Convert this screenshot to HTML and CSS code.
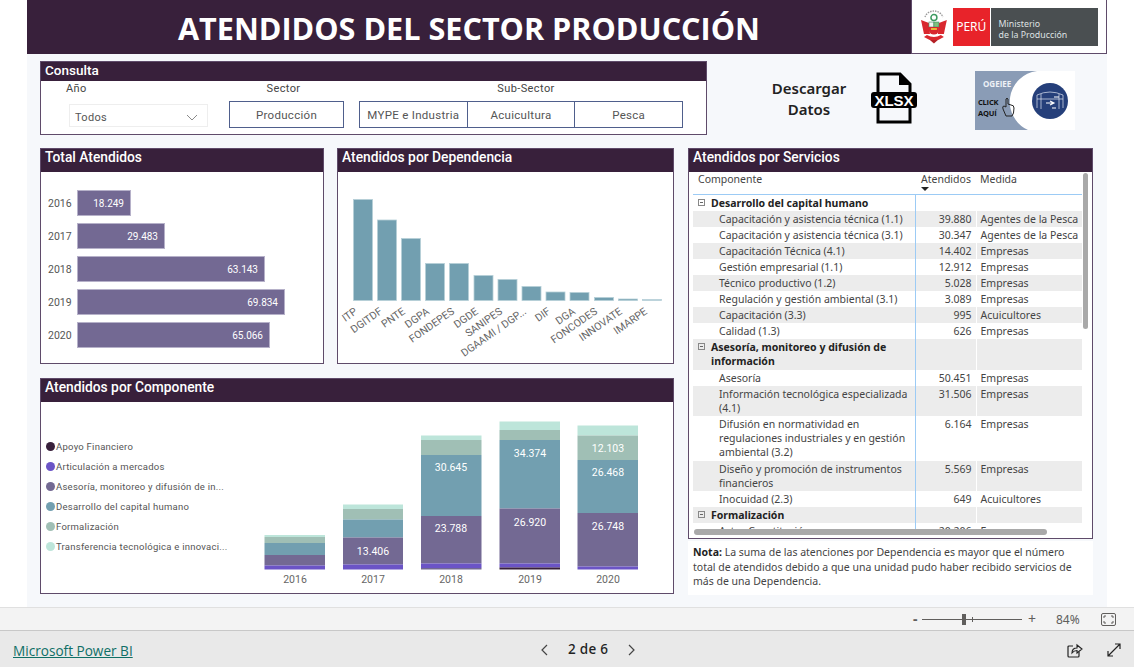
FILE: index.html
```html
<!DOCTYPE html>
<html lang="es">
<head>
    <meta charset="UTF-8">
    <title>Atendidos del Sector Producción</title>
    <link rel="stylesheet" href="styles.css">
</head>
<body>
    <div class="report">
        <header class="report-header">
            <h1>ATENDIDOS DEL SECTOR PRODUCCIÓN</h1>
            <div class="logo-box">
                <svg class="crest" viewBox="0 0 26 34" width="26" height="34">
                    <path d="M0 10 L8 13 L9 24 L3 24 Z" fill="#d9272e"/>
                    <path d="M26 10 L18 13 L17 24 L23 24 Z" fill="#d9272e"/>
                    <path d="M4 7 A9.500 9 0 0 1 22 7" fill="none" stroke="#9a9a9a" stroke-width="1.400" stroke-dasharray="1.500 1"/>
                    <circle cx="13" cy="7.500" r="3" fill="none" stroke="#3c9a60" stroke-width="1.500"/>
                    <rect x="8" y="12" width="5" height="5" fill="#f3f3f3" stroke="#3c8a60" stroke-width=".6"/>
                    <rect x="13" y="12" width="5" height="5" fill="#7fc27f" stroke="#3c8a60" stroke-width=".6"/>
                    <path d="M8 17 H18 V20 A5 4.500 0 0 1 8 20 Z" fill="#d9272e"/>
                    <path d="M10 18 H16 V20 H10 Z" fill="#e9b43a"/>
                    <path d="M3 27 Q13 34 23 27 L20 25 Q13 29 6 25 Z" fill="#d9272e"/>
                    <path d="M9 30 L13 33.500 L17 30 Z" fill="#b41f25"/>
                </svg>
                <div class="peru-mark">PERÚ</div>
                <div class="ministry-mark">Ministerio<br>de la Producción</div>
            </div>
        </header>

        <div class="content">
            <div class="top-row">
                <section class="consulta">
                    <div class="consulta-title">Consulta</div>
                    <div class="filters">
                        <div class="filter filter-year">
                            <div class="filter-label year-label">Año</div>
                            <div class="dropdown">
                                <span>Todos</span>
                                <svg viewBox="0 0 12 7" width="12" height="7"><path d="M1 1 L6 6 L11 1" fill="none" stroke="#8a8a8a"/></svg>
                            </div>
                        </div>
                        <div class="filter filter-sector">
                            <div class="filter-label sector-label">Sector</div>
                            <div class="slicer"><div class="slicer-btn">Producción</div></div>
                        </div>
                        <div class="filter filter-sub">
                            <div class="filter-label sub-label">Sub-Sector</div>
                            <div class="slicer">
                                <div class="slicer-btn">MYPE e Industria</div>
                                <div class="slicer-btn">Acuicultura</div>
                                <div class="slicer-btn">Pesca</div>
                            </div>
                        </div>
                    </div>
                </section>

                <div class="download-label">Descargar<br>Datos</div>
                <svg class="xlsx-icon" viewBox="0 0 46 52" width="46" height="52">
                    <path d="M7 20 V2 H29 L39 12 V20" fill="none" stroke="#000" stroke-width="3"/>
                    <path d="M28 1 V13 H40 Z" fill="#000"/>
                    <path d="M7 36 V50 H39 V36" fill="none" stroke="#000" stroke-width="3"/>
                    <rect x="0" y="20" width="46" height="16" rx="3" fill="#000"/>
                    <text class="xlsx-text" x="23" y="33.500" text-anchor="middle">XLSX</text>
                </svg>
                <svg class="ogeiee-tile" viewBox="0 0 100 59" width="100" height="59">
                    <rect width="100" height="59" fill="#8a9cb6"/>
                    <path d="M62 0 H100 V59 H53 A31 31 0 0 1 62 0 Z" fill="#fff"/>
                    <circle cx="75" cy="30" r="18" fill="#253f7a"/>
                    <path d="M62 24 Q75 18 88 24 M62 24 V37 M88 24 V37 M66 23 V38 M84 23 V38 M62 28 H88" fill="none" stroke="#dfe5f2" stroke-width=".7"/>
                    <path d="M71 32 L79 32 M75 30 L79 32 L75 34 M79 26 L84 26 M77 37 L81 37" fill="none" stroke="#fff" stroke-width="1.100"/>
                    <text class="ogeiee-name" x="8" y="16">OGEIEE</text>
                    <text class="ogeiee-click" x="3" y="34">CLICK</text>
                    <text class="ogeiee-click" x="3" y="45">AQUÍ</text>
                    <path d="M31 28 V36 L29 35 Q27 35 28 38 L31 45 H37 Q39 43 39 37 Q39 34 36 34 L33 33 V28 Q32 26.500 31 28 Z" fill="none" stroke="#222" stroke-width="1"/>
                </svg>
            </div>

            <div class="main-row">
                <div class="left-col">
                    <div class="chart-row">
                        <section class="panel panel-total">
                            <h2 class="panel-title">Total Atendidos</h2>
                            <div class="total-bars">
                                <div class="total-row"><span class="total-year">2016</span><div class="total-bar" style="width:54px">18.249</div></div>
                                <div class="total-row"><span class="total-year">2017</span><div class="total-bar" style="width:88px">29.483</div></div>
                                <div class="total-row"><span class="total-year">2018</span><div class="total-bar" style="width:188px">63.143</div></div>
                                <div class="total-row"><span class="total-year">2019</span><div class="total-bar" style="width:208px">69.834</div></div>
                                <div class="total-row"><span class="total-year">2020</span><div class="total-bar" style="width:193px">65.066</div></div>
                            </div>
                        </section>

                        <section class="panel panel-dependencia">
                            <h2 class="panel-title">Atendidos por Dependencia</h2>
                            <svg class="chart" viewBox="338 172 335 191" width="335" height="191">
                                <g class="bars-teal">
                                    <rect x="353.500" y="199.500" width="19" height="101"/>
                                    <rect x="377.500" y="220" width="19" height="80.500"/>
                                    <rect x="401.500" y="238.500" width="19" height="62"/>
                                    <rect x="425.500" y="263.500" width="19" height="37"/>
                                    <rect x="449.500" y="263.500" width="19" height="37"/>
                                    <rect x="474" y="275.500" width="19" height="25"/>
                                    <rect x="498" y="279.500" width="19" height="21"/>
                                    <rect x="522" y="286.500" width="19" height="14"/>
                                    <rect x="546" y="292" width="19" height="8.500"/>
                                    <rect x="570" y="292.500" width="19" height="8"/>
                                    <rect x="594.500" y="297.500" width="19" height="3"/>
                                    <rect x="618.500" y="299" width="19" height="1.500"/>
                                    <rect class="bar-faint" x="642.500" y="299.500" width="19" height="1"/>
                                </g>
                                <g class="axis-label">
                                    <text transform="translate(358 313) rotate(-35)" text-anchor="end">ITP</text>
                                    <text transform="translate(383 313) rotate(-35)" text-anchor="end">DGITDF</text>
                                    <text transform="translate(406 313) rotate(-35)" text-anchor="end">PNTE</text>
                                    <text transform="translate(430 313) rotate(-35)" text-anchor="end">DGPA</text>
                                    <text transform="translate(455 313) rotate(-35)" text-anchor="end">FONDEPES</text>
                                    <text transform="translate(479 313) rotate(-35)" text-anchor="end">DGDE</text>
                                    <text transform="translate(503 313) rotate(-35)" text-anchor="end">SANIPES</text>
                                    <text transform="translate(527 313) rotate(-35)" text-anchor="end">DGAAMI / DGP...</text>
                                    <text transform="translate(551 313) rotate(-35)" text-anchor="end">DIF</text>
                                    <text transform="translate(576 313) rotate(-35)" text-anchor="end">DGA</text>
                                    <text transform="translate(598 313) rotate(-35)" text-anchor="end">FONCODES</text>
                                    <text transform="translate(623 313) rotate(-35)" text-anchor="end">INNOVATE</text>
                                    <text transform="translate(648 313) rotate(-35)" text-anchor="end">IMARPE</text>
                                </g>
                            </svg>
                        </section>
                    </div>

                    <section class="panel panel-componente">
                        <h2 class="panel-title">Atendidos por Componente</h2>
                        <div class="componente-body">
                            <ul class="legend">
                                <li><i class="dot dot-dark"></i>Apoyo Financiero</li>
                                <li><i class="dot dot-violet"></i>Articulación a mercados</li>
                                <li><i class="dot dot-purple"></i>Asesoría, monitoreo y difusión de in...</li>
                                <li><i class="dot dot-teal"></i>Desarrollo del capital humano</li>
                                <li><i class="dot dot-sage"></i>Formalización</li>
                                <li><i class="dot dot-mint"></i>Transferencia tecnológica e innovaci...</li>
                            </ul>
                            <svg class="chart" viewBox="230 402 443 191" width="443" height="191">
                                <!-- 2016 -->
                                <rect class="s-mint" x="264.500" y="535" width="60.500" height="2"/>
                                <rect class="s-sage" x="264.500" y="537" width="60.500" height="6"/>
                                <rect class="s-teal" x="264.500" y="543" width="60.500" height="12"/>
                                <rect class="s-purple" x="264.500" y="555" width="60.500" height="10.500"/>
                                <rect class="s-violet" x="264.500" y="565.500" width="60.500" height="4"/>
                                <!-- 2017 -->
                                <rect class="s-mint" x="343" y="504.500" width="60" height="4.500"/>
                                <rect class="s-sage" x="343" y="509" width="60" height="10.500"/>
                                <rect class="s-teal" x="343" y="519.500" width="60" height="18"/>
                                <rect class="s-purple" x="343" y="537.500" width="60" height="27"/>
                                <rect class="s-violet" x="343" y="564.500" width="60" height="5"/>
                                <!-- 2018 -->
                                <rect class="s-mint" x="421" y="435.500" width="60.500" height="4.500"/>
                                <rect class="s-sage" x="421" y="440" width="60.500" height="15"/>
                                <rect class="s-teal" x="421" y="455" width="60.500" height="61"/>
                                <rect class="s-purple" x="421" y="516" width="60.500" height="47.500"/>
                                <rect class="s-violet" x="421" y="563.500" width="60.500" height="4.500"/>
                                <rect class="s-purple" x="421" y="568" width="60.500" height="1.500"/>
                                <!-- 2019 -->
                                <rect class="s-mint" x="499.500" y="421.500" width="60.500" height="8.500"/>
                                <rect class="s-sage" x="499.500" y="430" width="60.500" height="10"/>
                                <rect class="s-teal" x="499.500" y="440" width="60.500" height="68.500"/>
                                <rect class="s-purple" x="499.500" y="508.500" width="60.500" height="55"/>
                                <rect class="s-violet" x="499.500" y="563.500" width="60.500" height="4"/>
                                <rect class="s-dark" x="499.500" y="567.500" width="60.500" height="2"/>
                                <!-- 2020 -->
                                <rect class="s-mint" x="577.500" y="425.500" width="60.500" height="10"/>
                                <rect class="s-sage" x="577.500" y="435.500" width="60.500" height="24.500"/>
                                <rect class="s-teal" x="577.500" y="460" width="60.500" height="53"/>
                                <rect class="s-purple" x="577.500" y="513" width="60.500" height="53.500"/>
                                <rect class="s-violet" x="577.500" y="566.500" width="60.500" height="3"/>

                                <g class="stack-value" text-anchor="middle">
                                    <text x="373" y="554.500">13.406</text>
                                    <text x="451" y="470.500">30.645</text>
                                    <text x="451" y="532">23.788</text>
                                    <text x="530" y="456.500">34.374</text>
                                    <text x="530" y="525.500">26.920</text>
                                    <text x="608" y="452">12.103</text>
                                    <text x="608" y="476">26.468</text>
                                    <text x="608" y="529.500">26.748</text>
                                </g>
                                <g class="axis-label" text-anchor="middle">
                                    <text x="295" y="583">2016</text>
                                    <text x="373" y="583">2017</text>
                                    <text x="451" y="583">2018</text>
                                    <text x="530" y="583">2019</text>
                                    <text x="608" y="583">2020</text>
                                </g>
                            </svg>
                        </div>
                    </section>
                </div>

                <div class="right-col">
                    <section class="panel panel-servicios">
                        <h2 class="panel-title">Atendidos por Servicios</h2>
                        <div class="table-clip">
                            <table class="matrix">
                                <thead>
                                    <tr>
                                        <th class="col-name">Componente</th>
                                        <th class="col-num">Atendidos<i class="sort-arrow"></i></th>
                                        <th class="col-unit">Medida</th>
                                    </tr>
                                </thead>
                                <tbody>
                                    <tr class="group"><td><i class="toggle"></i><div>Desarrollo del capital humano</div></td><td></td><td></td></tr>
                                    <tr class="alt"><td>Capacitación y asistencia técnica (1.1)</td><td>39.880</td><td>Agentes de la Pesca</td></tr>
                                    <tr><td>Capacitación y asistencia técnica (3.1)</td><td>30.347</td><td>Agentes de la Pesca</td></tr>
                                    <tr class="alt"><td>Capacitación Técnica (4.1)</td><td>14.402</td><td>Empresas</td></tr>
                                    <tr><td>Gestión empresarial (1.1)</td><td>12.912</td><td>Empresas</td></tr>
                                    <tr class="alt"><td>Técnico productivo (1.2)</td><td>5.028</td><td>Empresas</td></tr>
                                    <tr><td>Regulación y gestión ambiental (3.1)</td><td>3.089</td><td>Empresas</td></tr>
                                    <tr class="alt"><td>Capacitación (3.3)</td><td>995</td><td>Acuicultores</td></tr>
                                    <tr><td>Calidad (1.3)</td><td>626</td><td>Empresas</td></tr>
                                    <tr class="group alt tall-group"><td><i class="toggle"></i><div>Asesoría, monitoreo y difusión de información</div></td><td></td><td></td></tr>
                                    <tr><td>Asesoría</td><td>50.451</td><td>Empresas</td></tr>
                                    <tr class="alt"><td>Información tecnológica especializada (4.1)</td><td>31.506</td><td>Empresas</td></tr>
                                    <tr class="tall-row"><td>Difusión en normatividad en regulaciones industriales y en gestión ambiental (3.2)</td><td>6.164</td><td>Empresas</td></tr>
                                    <tr class="alt"><td>Diseño y promoción de instrumentos financieros</td><td>5.569</td><td>Empresas</td></tr>
                                    <tr><td>Inocuidad (2.3)</td><td>649</td><td>Acuicultores</td></tr>
                                    <tr class="group alt"><td><i class="toggle"></i><div>Formalización</div></td><td></td><td></td></tr>
                                    <tr><td>Actas Constitución</td><td>20.206</td><td>Empresas</td></tr>
                                </tbody>
                            </table>
                            <div class="scroll-v"></div>
                        </div>
                        <div class="scroll-h"></div>
                    </section>
                    <p class="nota"><b>Nota:</b> La suma de las atenciones por Dependencia es mayor que el número total de atendidos debido a que una unidad pudo haber recibido servicios de más de una Dependencia.</p>
                </div>
            </div>
        </div>
    </div>

    <div class="zoom-bar">
        <span class="zoom-minus">-</span>
        <div class="zoom-track"><i class="zoom-thumb"></i><i class="zoom-tick"></i></div>
        <span class="zoom-plus">+</span>
        <span class="zoom-value">84%</span>
        <svg class="fit-icon" viewBox="0 0 15 13" width="15" height="13">
            <rect x=".5" y=".5" width="14" height="12" rx="1.500" fill="none" stroke="#605e5c"/>
            <path d="M3 5 V3 H5 M10 3 H12 V5 M12 8 V10 H10 M5 10 H3 V8" fill="none" stroke="#605e5c"/>
        </svg>
    </div>

    <footer class="pbi-footer">
        <a class="pbi-link" href="#">Microsoft Power BI</a>
        <div class="pager">
            <svg viewBox="0 0 8 12" width="8" height="12"><path d="M7 1 L2 6 L7 11" fill="none" stroke="#444" stroke-width="1.200"/></svg>
            <span>2 de 6</span>
            <svg viewBox="0 0 8 12" width="8" height="12"><path d="M1 1 L6 6 L1 11" fill="none" stroke="#444" stroke-width="1.200"/></svg>
        </div>
        <div class="footer-icons">
            <svg viewBox="0 0 16 15" width="16" height="15">
                <path d="M6 3 H2 Q1 3 1 4 V13 Q1 14 2 14 H11 Q12 14 12 13 V9" fill="none" stroke="#222" stroke-width="1.200"/>
                <path d="M5 10 Q5 5 10 5 V2 L15 6 L10 10 V7.500 Q7 7.500 5 10 Z" fill="none" stroke="#222" stroke-width="1.100"/>
            </svg>
            <svg viewBox="0 0 14 14" width="14" height="14">
                <path d="M1 13 L13 1 M8 1 H13 V6 M1 8 V13 H6" fill="none" stroke="#222" stroke-width="1.200"/>
            </svg>
        </div>
    </footer>
</body>
</html>
```

FILE: styles.css
```css
* {
    box-sizing: border-box;
}
body {
    margin: 0;
    background: white;
    font-family: "Noto Sans", "Open Sans", sans-serif;
    color: #333;
    height: 667px;
    overflow: hidden;
}
.report {
    width: 1080px;
    height: 607px;
    margin-left: 27px;
    background: #f6f8fb;
}
.report-header {
    height: 54px;
    background: #38203b;
    display: flex;
    justify-content: space-between;
}
.report-header h1 {
    margin: 0 0 0 151px;
    color: white;
    font-family: "Open Sans", sans-serif;
    font-size: 30.600px;
    font-weight: 700;
    line-height: 56px;
    white-space: nowrap;
}
.logo-box {
    width: 196px;
    background: white;
    border: 1px solid #5f4b6a;
    border-top: 0;
    display: flex;
    align-items: center;
    padding: 0 8px 0 9px;
    height: 54px;
}
.crest {
    margin-right: 6px;
}
.peru-mark {
    width: 37px;
    height: 38px;
    background: #e8232a;
    color: white;
    font-size: 12px;
    line-height: 38px;
    text-align: center;
    margin-right: 1px;
}
.ministry-mark {
    width: 108px;
    height: 38px;
    background: #4a4f51;
    color: #dfe2e3;
    font-size: 8.800px;
    line-height: 11px;
    padding: 11px 0 0 8px;
    white-space: nowrap;
}

.content {
    padding: 7px 0 0 13px;
}
.top-row {
    display: flex;
    align-items: flex-start;
    height: 74px;
    margin-bottom: 13px;
}
.consulta {
    width: 667px;
    height: 74px;
    background: white;
    border: 1px solid #5f4b6a;
}
.consulta-title {
    height: 19px;
    background: #38203b;
    color: white;
    font-family: Roboto, sans-serif;
    font-weight: 500;
    font-size: 13.500px;
    line-height: 17px;
    padding-left: 4px;
}
.filters {
    display: flex;
    padding-left: 28px;
}
.filter-label {
    font-family: Roboto, sans-serif;
    font-size: 11px;
    letter-spacing: .4px;
    color: #444;
    text-align: center;
    line-height: 16px;
    height: 20px;
}
.year-label {
    text-align: left;
    margin-left: -3px;
}
.sector-label {
    padding-right: 6px;
}
.sub-label {
    padding-left: 10px;
}
.filter-year {
    width: 139px;
    margin-right: 21px;
}
.filter-sector {
    width: 115px;
    margin-right: 15px;
}
.filter-sub {
    width: 324px;
}
.dropdown {
    height: 23px;
    margin-top: 3px;
    border: 1px solid #eeeeee;
    display: flex;
    align-items: center;
    justify-content: space-between;
    padding: 4px 9px 0 5px;
    font-family: Roboto, sans-serif;
    font-size: 11px;
    letter-spacing: .3px;
    color: #555;
}
.slicer {
    display: flex;
}
.slicer-btn {
    flex: 1;
    height: 27px;
    border: 1px solid #4f5f8c;
    margin-left: -1px;
    text-align: center;
    font-family: Roboto, sans-serif;
    font-size: 11.500px;
    letter-spacing: .3px;
    line-height: 27px;
    color: #555;
    white-space: nowrap;
}
.slicer-btn:first-child {
    margin-left: 0;
}
.download-label {
    width: 76px;
    margin: 17px 0 0 64px;
    font-size: 15px;
    font-weight: 600;
    line-height: 21px;
    color: #222;
    text-align: center;
}
.xlsx-icon {
    margin: 11px 0 0 24px;
}
.xlsx-text {
    font-family: "Liberation Sans", sans-serif;
    font-weight: 700;
    font-size: 15px;
    fill: white;
}
.ogeiee-tile {
    margin: 10px 0 0 58px;
}
.ogeiee-name {
    font-family: "Open Sans", sans-serif;
    font-weight: 700;
    font-size: 8px;
    fill: #eef1f6;
}
.ogeiee-click {
    font-family: "Open Sans", sans-serif;
    font-weight: 700;
    font-size: 7.500px;
    letter-spacing: -.2px;
    fill: #111;
}

.main-row {
    display: grid;
    grid-template-columns: 634px 405px;
    column-gap: 14px;
}
.left-col {
    display: flex;
    flex-direction: column;
    gap: 14px;
}
.chart-row {
    display: flex;
    gap: 13px;
}
.panel {
    background: white;
    border: 1px solid #5f4b6a;
    overflow: hidden;
}
.panel-title {
    margin: 0;
    height: 23px;
    background: #38203b;
    color: white;
    font-family: Roboto, sans-serif;
    font-size: 13.800px;
    font-weight: 500;
    line-height: 17px;
    padding-left: 4px;
}
.panel-total {
    width: 284px;
    height: 216px;
}
.panel-dependencia {
    width: 337px;
    height: 216px;
}
.panel-componente {
    height: 216px;
}
.chart {
    display: block;
}

.total-bars {
    padding: 18px 0 0 7px;
    display: flex;
    flex-direction: column;
    gap: 7px;
}
.total-row {
    display: flex;
    align-items: center;
    height: 26px;
}
.total-year {
    width: 29px;
    font-family: Roboto, sans-serif;
    font-size: 10.500px;
    color: #555;
}
.total-bar {
    height: 26px;
    background: #736993;
    border: 1px solid #b6b1c9;
    color: white;
    font-family: Roboto, sans-serif;
    font-size: 10px;
    line-height: 25px;
    text-align: right;
    padding-right: 6px;
}

.bars-teal rect {
    fill: #729fb0;
    stroke: #b6cfd8;
    stroke-width: .8;
}
.bars-teal .bar-faint {
    fill: #a9c6d1;
}
.axis-label text {
    font-family: Roboto, sans-serif;
    font-size: 10.500px;
    fill: #666;
}
.stack-value text {
    font-family: Roboto, sans-serif;
    font-size: 10.500px;
    fill: white;
}
.s-mint { fill: #bde5da; }
.s-sage { fill: #a0bfb5; }
.s-teal { fill: #729fb0; }
.s-purple { fill: #736993; }
.s-violet { fill: #6b54c6; }
.s-dark { fill: #38203b; }

.componente-body {
    display: flex;
}
.legend {
    list-style: none;
    width: 189px;
    margin: 0;
    padding: 34px 0 0 5px;
    font-family: Roboto, sans-serif;
    font-size: 9.500px;
    letter-spacing: .25px;
    color: #555;
}
.legend li {
    display: flex;
    align-items: center;
    height: 20.100px;
    white-space: nowrap;
}
.dot {
    width: 9px;
    height: 9px;
    border-radius: 50%;
    margin-right: 1px;
    flex: none;
}
.dot-dark { background: #38203b; }
.dot-violet { background: #6b54c6; }
.dot-purple { background: #736993; }
.dot-teal { background: #729fb0; }
.dot-sage { background: #a0bfb5; }
.dot-mint { background: #bde5da; }

.panel-servicios {
    height: 391px;
    position: relative;
}
.table-clip {
    position: relative;
    height: 357px;
    margin-left: 4px;
    overflow: hidden;
}
.matrix {
    width: 389px;
    table-layout: fixed;
    border-collapse: collapse;
    font-size: 10.500px;
    line-height: 14px;
    color: #444;
}
.matrix th {
    height: 22px;
    padding: 0;
    font-weight: 400;
    text-align: left;
    vertical-align: top;
    border-bottom: 1px solid #9ccbf5;
    white-space: nowrap;
}
.col-name {
    width: 222px;
    padding-left: 5px !important;
}
.col-num {
    width: 61px;
    padding-left: 6px !important;
    position: relative;
}
.col-unit {
    padding-left: 4px !important;
}
.sort-arrow {
    position: absolute;
    left: 6px;
    top: 15px;
    border: 4px solid transparent;
    border-top: 4px solid #222;
}
.matrix td {
    height: 16px;
    padding: 1px 0;
    vertical-align: top;
}
.matrix .tall-group td {
    height: 31px;
}
.matrix .tall-row td {
    height: 45px;
}
.matrix td:nth-child(1) {
    padding: 1px 4px 1px 26px;
    border-right: 1px solid #9ccbf5;
}
.matrix td:nth-child(2) {
    text-align: right;
    padding-right: 4px;
    border-right: 1px solid white;
}
.matrix td:nth-child(3) {
    padding-left: 4px;
    white-space: nowrap;
}
.matrix .alt td {
    background: #ececec;
}
.matrix .group td:first-child {
    position: relative;
    padding-left: 18px;
    padding-right: 8px;
    font-weight: 700;
    color: #222;
}
.toggle {
    position: absolute;
    left: 5px;
    top: 4px;
    width: 7px;
    height: 7px;
    border: 1px solid #888;
    background: linear-gradient(#666, #666) center / 3px 1px no-repeat;
}
.scroll-v {
    position: absolute;
    left: 390px;
    top: 1px;
    width: 5px;
    height: 156px;
    border-radius: 3px;
    background: #a9a9a9;
}
.scroll-h {
    margin: 0 0 0 5px;
    width: 353px;
    height: 6px;
    border-radius: 3px;
    background: #a9a9a9;
}
.nota {
    margin: 2px 0 0;
    height: 54px;
    background: white;
    padding: 4px 5px 0;
    font-size: 10.500px;
    line-height: 14.500px;
    color: #444;
}
.nota b {
    color: #222;
}

.zoom-bar {
    height: 24px;
    background: #f3f3f3;
    border-top: 1px solid #e0e0e0;
    border-bottom: 1px solid #c8c8c8;
    display: flex;
    align-items: center;
    padding-left: 913px;
    color: #605e5c;
    font-family: "Noto Sans", sans-serif;
}
.zoom-minus {
    width: 9px;
    font-size: 14px;
    font-weight: 700;
    line-height: 20px;
}
.zoom-track {
    position: relative;
    width: 100px;
    height: 1px;
    background: #605e5c;
}
.zoom-thumb {
    position: absolute;
    left: 40px;
    top: -5px;
    width: 4px;
    height: 11px;
    background: #605e5c;
}
.zoom-tick {
    position: absolute;
    left: 50px;
    top: -2px;
    width: 1px;
    height: 5px;
    background: #605e5c;
}
.zoom-plus {
    margin-left: 6px;
    font-size: 14px;
    width: 28px;
    line-height: 20px;
}
.zoom-value {
    width: 45px;
    font-size: 12px;
}
.pbi-footer {
    height: 36px;
    background: #e9e9e9;
    display: flex;
    align-items: center;
    position: relative;
    padding: 2px 13px 0;
}
.pbi-link {
    color: #0f6f66;
    font-size: 13.600px;
    text-decoration: underline;
    font-family: "Open Sans", sans-serif;
}
.pager {
    position: absolute;
    left: 540px;
    top: 12px;
    display: flex;
    align-items: center;
    gap: 20px;
    font-size: 13.500px;
    font-weight: 500;
    letter-spacing: .3px;
    line-height: 13px;
    color: #222;
}
.footer-icons {
    margin-left: auto;
    display: flex;
    align-items: center;
    gap: 24px;
}
```
